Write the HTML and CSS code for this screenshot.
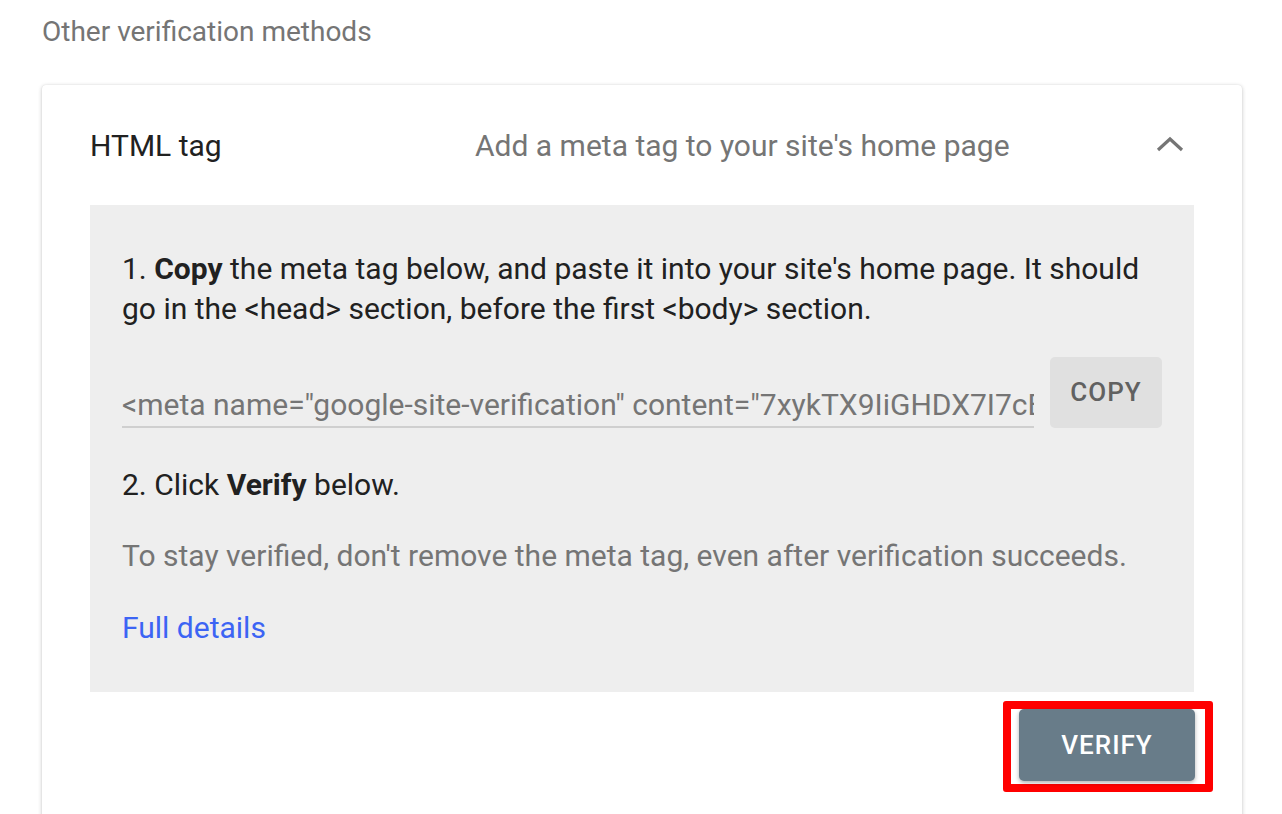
FILE: index.html
```html
<!DOCTYPE html>
<html>
<head>
<meta charset="utf-8">
<link rel="stylesheet" href="styles.css">
</head>
<body>
<div class="page">
  <h2 class="section-title">Other verification methods</h2>
  <div class="card">
    <div class="card-header">
      <div class="method-name">HTML tag</div>
      <div class="method-desc">Add a meta tag to your site's home page</div>
      <svg class="chevron" width="30" height="20" viewBox="0 0 30 20"><polyline points="3,16 15,5 27,16" fill="none" stroke="#757575" stroke-width="3.2"/></svg>
    </div>
    <div class="instructions">
      <p class="step">1. <b>Copy</b> the meta tag below, and paste it into your site's home page. It should go in the &lt;head&gt; section, before the first &lt;body&gt; section.</p>
      <div class="copy-row">
        <div class="tag-field"><div class="tag-text">&lt;meta name="google-site-verification" content="7xykTX9IiGHDX7I7cBmN0xkq5dR3rTl0" /&gt;</div></div>
        <button class="copy-btn">COPY</button>
      </div>
      <p class="step step2">2. Click <b>Verify</b> below.</p>
      <p class="note">To stay verified, don't remove the meta tag, even after verification succeeds.</p>
      <a class="details" href="#">Full details</a>
    </div>
    <div class="actions">
      <div class="highlight">
        <button class="verify-btn">VERIFY</button>
      </div>
    </div>
  </div>
</div>
</body>
</html>
```
FILE: styles.css
```css
html, body {
  margin: 0;
  padding: 0;
  background: #ffffff;
  font-family: Roboto, "Noto Sans", sans-serif;
  overflow: hidden;
}
.page {
  padding: 0 40px 0 42px;
}
.section-title {
  margin: 0;
  height: 85px;
  box-sizing: border-box;
  padding-top: 14px;
  font-size: 28px;
  line-height: 36px;
  font-weight: 400;
  color: #757575;
}
.card {
  width: 1200px;
  background: #fff;
  border-radius: 4px;
  box-shadow: 0 1px 4px rgba(0,0,0,0.22), 0 0 1px rgba(0,0,0,0.12);
  padding: 0 48px 40px 48px;
  box-sizing: border-box;
}
.card-header {
  height: 120px;
  display: flex;
  align-items: center;
}
.method-name {
  width: 385px;
  font-size: 30px;
  color: #212121;
}
.method-desc {
  flex: 1;
  font-size: 30px;
  color: #757575;
}
.chevron {
  margin-right: 9px;
  margin-top: -3px;
}
.instructions {
  background: #eeeeee;
  padding: 44px 32px 44px 32px;
  display: flex;
  flex-direction: column;
  align-items: flex-start;
}
.step {
  margin: 0;
  font-size: 30px;
  line-height: 40px;
  color: #212121;
}
.step b { font-weight: 700; }
.copy-row {
  margin-top: 28px;
  display: flex;
  align-self: stretch;
  align-items: flex-start;
  gap: 16px;
}
.tag-field {
  flex: 1;
  min-width: 0;
  height: 69px;
  border-bottom: 2px solid #cfcfcf;
  overflow: hidden;
  display: flex;
  align-items: flex-end;
}
.tag-text {
  width: 100%;
  overflow: hidden;
  white-space: nowrap;
  font-size: 30px;
  line-height: 40px;
  color: #757575;
  padding-bottom: 1px;
}
.copy-btn {
  width: 112px;
  height: 71px;
  flex: none;
  border: none;
  border-radius: 5px;
  background: #e0e0e0;
  color: #616161;
  font-family: Roboto, sans-serif;
  font-weight: 500;
  font-size: 26px;
  letter-spacing: 1px;
  padding: 0 0 2px 0;
}
.step2 { margin-top: 37px; }
.note {
  margin: 31px 0 0 0;
  font-size: 30px;
  line-height: 40px;
  color: #757575;
}
.details {
  margin-top: 32px;
  font-size: 30px;
  line-height: 40px;
  color: #3c64f4;
  text-decoration: none;
}
.actions {
  display: flex;
  justify-content: flex-end;
  margin-right: -19px;
  margin-top: 9px;
}
.highlight {
  border: 8px solid #ff0000;
  border-radius: 3px;
  padding: 0 10px 3px 8px;
}
.verify-btn {
  width: 176px;
  height: 72px;
  border: none;
  border-radius: 5px;
  background: #687c89;
  color: #ffffff;
  font-family: Roboto, sans-serif;
  font-weight: 500;
  font-size: 26px;
  letter-spacing: 1px;
  box-shadow: 0 2px 4px rgba(0,0,0,0.3);
  display: block;
}
```
